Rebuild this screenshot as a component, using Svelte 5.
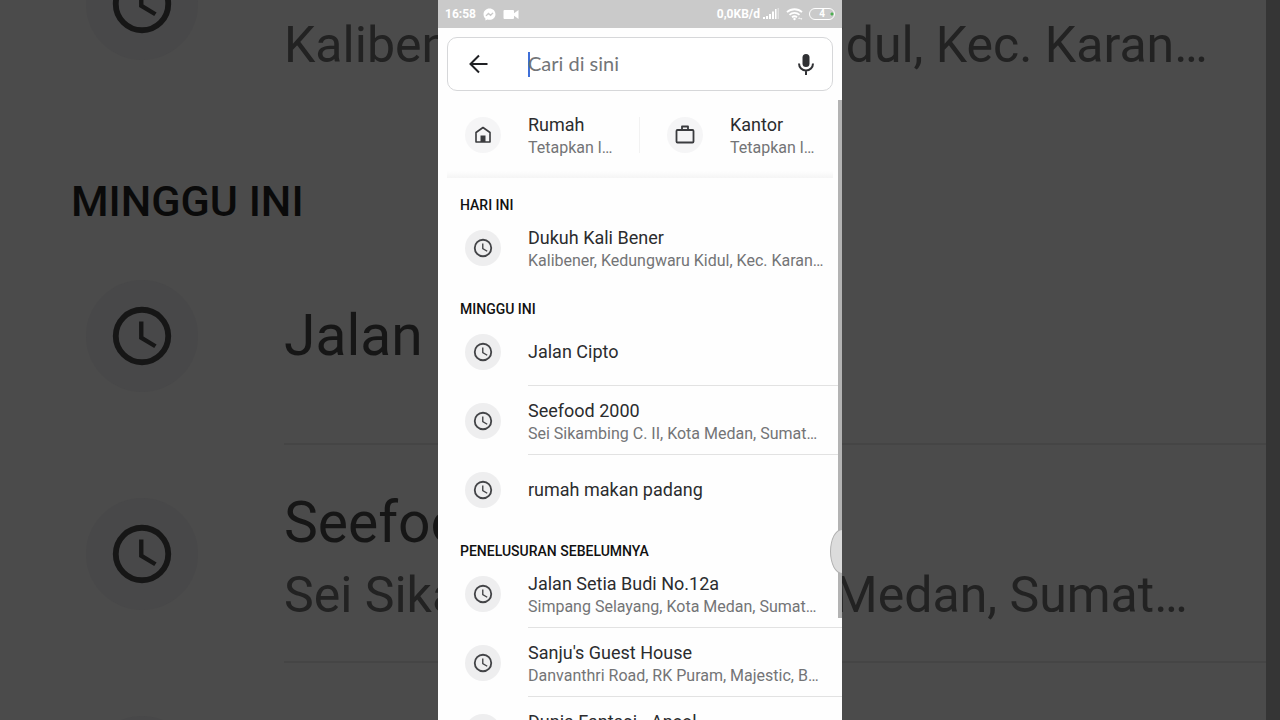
<script>
    // Saved places under the search bar
    const shortcuts = [
        { icon: "home", title: "Rumah", detail: "Tetapkan l…" },
        { icon: "work", title: "Kantor", detail: "Tetapkan l…" },
    ];

    // Search history, newest group first
    const groups = [
        {
            heading: "HARI INI",
            places: [
                { title: "Dukuh Kali Bener", detail: "Kalibener, Kedungwaru Kidul, Kec. Karan…" },
            ],
        },
        {
            heading: "MINGGU INI",
            places: [
                { title: "Jalan Cipto" },
                { title: "Seefood 2000", detail: "Sei Sikambing C. II, Kota Medan, Sumat…" },
                { title: "rumah makan padang" },
            ],
        },
        {
            heading: "PENELUSURAN SEBELUMNYA",
            places: [
                { title: "Jalan Setia Budi No.12a", detail: "Simpang Selayang, Kota Medan, Sumat…" },
                { title: "Sanju's Guest House", detail: "Danvanthri Road, RK Puram, Majestic, B…" },
                { title: "Dunia Fantasi - Ancol", detail: "Ancol, Kota Jakarta Utara" },
            ],
        },
    ];

    let query = $state("");
</script>

{#snippet history(list)}
    {#each list as group}
        <section>
            <h2>{group.heading}</h2>
            <ul>
                {#each group.places as place, i}
                    <li>
                        <span class="circle">
                            <svg class="clock" viewBox="0 0 24 24" aria-hidden="true">
                                <circle cx="12" cy="12" r="9" fill="none" stroke="currentColor" stroke-width="2" />
                                <path fill="currentColor" d="M12.5 7H11v6l5.2 3.1.8-1.2-4.5-2.7z" />
                            </svg>
                        </span>
                        <div class="body" class:two-line={place.detail} class:last={i === group.places.length - 1}>
                            <span class="title">{place.title}</span>
                            {#if place.detail}
                                <span class="detail">{place.detail}</span>
                            {/if}
                        </div>
                    </li>
                {/each}
            </ul>
        </section>
    {/each}
{/snippet}

<div class="stage">
    <!-- Enlarged, dimmed copy of the list behind the phone -->
    <div class="backdrop" aria-hidden="true">
        <div class="backdrop-list">
            {@render history(groups.slice(0, 2))}
        </div>
    </div>

    <main class="phone">
        <header class="status">
            <span class="time">16:58</span>
            <svg width="13" height="13" viewBox="0 0 24 24" aria-hidden="true">
                <path fill="#fff" d="M12 1C5.800 1 1 5.500 1 11.500c0 3.200 1.300 5.900 3.500 7.800V23l3.400-1.800c1.300.4 2.700.6 4.100.6 6.200 0 11-4.500 11-10.400S18.200 1 12 1z" />
                <path fill="none" stroke="#cacaca" stroke-width="2.5" d="M5.500 14.500l4.500-4.500 4 3.500 4.500-4.500" />
            </svg>
            <svg width="16" height="11" viewBox="0 0 16 11" aria-hidden="true">
                <path fill="#fff" d="M1.500 1h8.500a1 1 0 0 1 1 1v2.200L15.500 1v9L11 6.800V9a1 1 0 0 1-1 1H1.500a1 1 0 0 1-1-1V2a1 1 0 0 1 1-1z" />
            </svg>
            <span class="speed">0,0KB/d</span>
            <svg width="16" height="12" viewBox="0 0 16 12" aria-hidden="true">
                <path fill="#fff" d="M0 9h2v2H0zM3 8h2v3H3zM6 6h2v5H6zM9 3.500h2V11H9zM12 1h1.500v10H12z" />
                <path fill="#fff" opacity=".4" d="M14.500 0H16v11h-1.500z" />
            </svg>
            <svg class="wifi" width="18" height="14" viewBox="0 0 18 14" aria-hidden="true">
                <g fill="none" stroke="#fff" stroke-width="1.8">
                    <path d="M1 5.200a11 11 0 0 1 15 0" />
                    <path d="M3.500 7.800a7.500 7.500 0 0 1 10 0" />
                    <path d="M6 10.200a4 4 0 0 1 5 0" />
                </g>
                <circle cx="8.500" cy="12" r="1.200" fill="#fff" />
                <path fill="#fff" opacity=".7" d="M12 12l1.200-2 1.200 2zM14 11l1.200 2.200 1.200-2.200z" />
            </svg>
            <span class="battery">4</span>
        </header>

        <form class="search" onsubmit={(e) => e.preventDefault()}>
            <button type="button" class="back" aria-label="Kembali">
                <svg width="24" height="24" viewBox="0 0 24 24" aria-hidden="true">
                    <path fill="none" stroke="#202124" stroke-width="2" d="M21.500 12H5M13 3.500L4.500 12l8.500 8.500" />
                </svg>
            </button>
            <span class="caret"></span>
            <input type="text" aria-label="Cari di sini" placeholder="Cari di sini" bind:value={query} />
            <button type="button" class="mic" aria-label="Penelusuran suara">
                <svg width="24" height="24" viewBox="0 0 24 24" aria-hidden="true">
                    <rect x="8.500" y="2" width="7" height="13" rx="3.500" fill="#303134" />
                    <path fill="none" stroke="#303134" stroke-width="2" d="M5 11.500a7 7 0 0 0 14 0M12 18.500V23" />
                </svg>
            </button>
        </form>

        <nav class="shortcuts">
            {#each shortcuts as item}
                <button type="button" class="shortcut">
                    <span class="circle">
                        {#if item.icon === "home"}
                            <svg width="20" height="20" viewBox="0 0 20 20" aria-hidden="true">
                                <path fill="none" stroke="#3a3b3e" stroke-width="1.6" stroke-linejoin="round" d="M3 17V7.500L10 2.500l7 5V17z" />
                                <path fill="#3a3b3e" d="M7.500 10.500h5V17h-5z" />
                            </svg>
                        {:else}
                            <svg width="20" height="20" viewBox="0 0 20 20" aria-hidden="true">
                                <rect x="1.500" y="5" width="17" height="12.500" rx="1" fill="none" stroke="#3a3b3e" stroke-width="1.8" />
                                <path fill="none" stroke="#3a3b3e" stroke-width="1.8" stroke-linejoin="round" d="M7 5V1.500h6V5" />
                            </svg>
                        {/if}
                    </span>
                    <span class="body two-line last">
                        <span class="title">{item.title}</span>
                        <span class="detail">{item.detail}</span>
                    </span>
                </button>
            {/each}
        </nav>

        {@render history(groups)}

        <div class="scrollbar"></div>
        <div class="edge-handle"></div>
    </main>
</div>

<style>
    :global(body) {
        margin: 0;
        background: #4b4b4b;
    }

    .stage {
        position: relative;
        height: 100vh;
        overflow: hidden;
        font-family: Roboto, "Liberation Sans", sans-serif;
    }

    /* Backdrop */
    .backdrop {
        --circle: 112px;
        --clock: 70px;
        --inset: 86px;
        --row: 218px;
        --rule: 2px;
        --line: 73px;
        --nudge: 12px;
        --title-size: 57px;
        --detail-size: 50px;
        --heading-size: 43px;
        --heading-top: 62px;
        --heading-line: 52px;
        --heading-left: 71px;
        --title-color: #161616;
        --icon-color: #161616;
        --detail-color: #222;
        --heading-color: #0a0a0a;
        --circle-color: #484849;
        --rule-color: #454545;
        position: absolute;
        inset: 0;
        overflow: hidden;
        background: #4b4b4b;
        border-right: 14px solid #353535;
    }

    /* starts above the window, so that the first group is cut off */
    .backdrop-list {
        margin-top: -219px;
    }

    /* Phone */
    .phone {
        --circle: 36px;
        --clock: 22px;
        --inset: 27px;
        --row: 69px;
        --rule: 1px;
        --line: 23px;
        --nudge: 4px;
        --title-size: 18px;
        --detail-size: 16px;
        --heading-size: 14px;
        --heading-top: 19px;
        --heading-line: 16px;
        --heading-left: 22px;
        --title-color: #2b2c2e;
        --icon-color: #434447;
        --detail-color: #737476;
        --heading-color: #111;
        --circle-color: #eeeeef;
        --rule-color: #e2e2e2;
        position: relative;
        width: 100%;
        max-width: 404px;
        height: 100%;
        margin: 0 auto;
        overflow: hidden;
        background: #fefefe;
    }

    .status {
        display: flex;
        align-items: center;
        height: 28px;
        padding: 0 7px;
        background: #cacaca;
        color: #fff;
        font-size: 12px;
        font-weight: 700;
    }

    .status svg {
        margin-left: 7px;
    }

    .speed {
        margin-left: auto;
    }

    .status .speed + svg {
        margin-left: 3px;
    }

    .battery {
        box-sizing: border-box;
        width: 26px;
        height: 12px;
        margin-left: 5px;
        border: 1px solid #fff;
        border-radius: 6px;
        background: radial-gradient(circle at 22px 5px, #4caf50 1px, transparent 2px);
        font-size: 10px;
        line-height: 10px;
        text-align: center;
    }

    .search {
        display: flex;
        align-items: center;
        box-sizing: border-box;
        height: 54px;
        margin: 9px 9px 0;
        padding: 0 14px 0 18px;
        border: 1px solid #d6d7d9;
        border-radius: 10px;
        background: #fff;
    }

    button {
        padding: 0;
        border: 0;
        background: none;
        font: inherit;
        text-align: left;
    }

    .back,
    .mic {
        display: flex;
    }

    .back {
        margin-right: 38px;
    }

    .caret {
        width: 2px;
        height: 25px;
        margin-right: -2px;
        background: #3f6fd8;
    }

    input {
        flex: 1;
        min-width: 0;
        padding: 0 0 2px;
        border: 0;
        outline: 0;
        background: none;
        font-family: Lato, Roboto, sans-serif;
        font-size: 20px;
        color: #202124;
    }

    input::placeholder {
        color: #737578;
        opacity: 1;
    }

    /* Home and work */
    .shortcuts {
        display: grid;
        grid-template-columns: 1fr 1fr;
        box-sizing: border-box;
        height: 87px;
        background: linear-gradient(#fefefe, #f5f5f5) 9px 80px / calc(100% - 18px) 7px no-repeat;
    }

    .shortcut {
        display: flex;
        align-items: center;
    }

    .shortcut .circle {
        background: #f5f5f6;
    }

    .shortcut:first-child {
        background: linear-gradient(#f2f2f2, #f2f2f2) 100% 50% / 1px 36px no-repeat;
    }

    /* History rows */
    h2 {
        margin: 0;
        padding: var(--heading-top) 0 0 var(--heading-left);
        color: var(--heading-color);
        font-size: var(--heading-size);
        font-weight: 500;
        line-height: var(--heading-line);
    }

    ul {
        margin: 0;
        padding: 0;
        list-style: none;
    }

    li {
        display: flex;
        align-items: center;
        height: var(--row);
    }

    .circle {
        display: flex;
        flex: none;
        align-items: center;
        justify-content: center;
        width: var(--circle);
        height: var(--circle);
        margin: 0 var(--inset);
        border-radius: 50%;
        background: var(--circle-color);
        color: var(--icon-color);
    }

    .clock {
        width: var(--clock);
        height: var(--clock);
    }

    .body {
        display: flex;
        flex: 1;
        flex-direction: column;
        justify-content: center;
        box-sizing: border-box;
        min-width: 0;
        height: 100%;
        border-bottom: var(--rule) solid var(--rule-color);
        line-height: var(--line);
        white-space: nowrap;
    }

    .body.two-line {
        padding-top: var(--nudge);
    }

    .body.last {
        border-bottom-color: transparent;
    }

    .title {
        color: var(--title-color);
        font-size: var(--title-size);
    }

    .detail {
        color: var(--detail-color);
        font-size: var(--detail-size);
    }

    /* Overlays on the right edge */
    .scrollbar {
        position: absolute;
        top: 100px;
        right: 0;
        width: 4px;
        height: 518px;
        background: #b3b3b3;
    }

    .edge-handle {
        position: absolute;
        top: 529px;
        right: -12px;
        box-sizing: border-box;
        width: 24px;
        height: 45px;
        border: 1px solid #b0b0b0;
        border-radius: 50%;
        background: #dcdcdc;
    }
</style>
